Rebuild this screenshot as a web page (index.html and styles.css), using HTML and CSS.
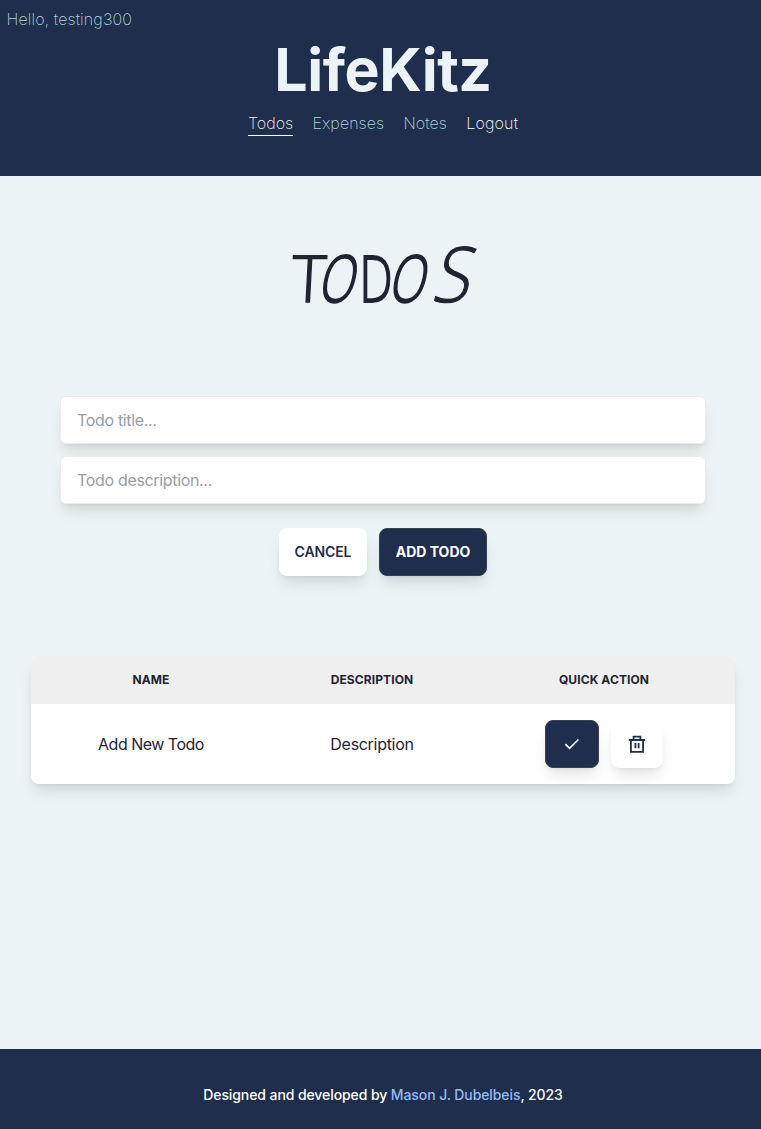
FILE: index.html
```html
<!DOCTYPE html>
<html lang="en">
<head>
<meta charset="utf-8">
<title>LifeKitz</title>
<link rel="stylesheet" href="styles.css">
</head>
<body>
<div class="page">
  <header class="header">
    <p class="greeting">Hello, testing300</p>
    <h1 class="brand">LifeKitz</h1>
    <nav class="nav">
      <a class="nav-link active">Todos</a>
      <a class="nav-link expenses">Expenses</a>
      <a class="nav-link notes">Notes</a>
      <a class="nav-link logout">Logout</a>
    </nav>
  </header>
  <main class="main">
    <h2 class="title"><span class="t">T</span><span class="o">O</span><span class="d">D</span><span class="o">O</span><span class="s">S</span></h2>
    <form class="form">
      <input class="field" type="text" placeholder="Todo title...">
      <input class="field" type="text" placeholder="Todo description...">
      <div class="buttons">
        <button class="btn light cancel" type="button">CANCEL</button>
        <button class="btn dark add" type="button">ADD TODO</button>
      </div>
    </form>
    <section class="table">
      <div class="row head"><span>NAME</span><span>DESCRIPTION</span><span>QUICK ACTION</span></div>
      <div class="row body-row">
        <span class="name">Add New Todo</span><span class="desc">Description</span>
        <div class="actions">
          <button class="btn dark check" type="button" aria-label="Complete">
            <svg width="16" height="16" viewBox="0 0 16 16" fill="none" stroke="currentColor" stroke-width="1.6"><path d="M1.4 8.1 5.6 12.3 14.4 3.5"/></svg>
          </button>
          <button class="btn light trash" type="button" aria-label="Delete">
            <svg width="18" height="18" viewBox="0 0 18 18" fill="none" stroke="currentColor" stroke-width="1.8"><path d="M.8 5h16.4M2.9 5v11.9h12.2V5M5.6 5V1.6h6.8V5M7.4 8.1v5.2M10.6 8.1v5.2"/></svg>
          </button>
        </div>
      </div>
    </section>
  </main>
  <footer class="footer"><p>Designed and developed by <a>Mason J. Dubelbeis</a>, 2023</p></footer>
</div>
</body>
</html>
```
FILE: styles.css
```css
* { box-sizing: border-box; }
body { margin: 0; background: #ebf3f7; color: #1f2430; font-family: Inter, "Liberation Sans", sans-serif; font-size: 16px; }
p, h1, h2 { margin: 0; }
.page { display: flex; flex-direction: column; height: 1129px; overflow: hidden; }
.header { height: 176px; flex: none; background: #1f2e4c; padding-left: 5px; }
.greeting { padding: 9px 0 0 1.5px; line-height: 20px; font-weight: 200; letter-spacing: .12px; color: #a8dada; }
.brand { height: 72px; margin-top: 5px; line-height: 72px; font-size: 59px; font-weight: 700; letter-spacing: -.45px; text-align: center; color: #ebf3f7; }
.nav { display: flex; justify-content: center; gap: 19.4px; margin-top: 6px; }
.nav-link { height: 24px; line-height: 23px; font-weight: 200; letter-spacing: .05px; color: #a8dada; border-bottom: 1px solid transparent; }
.nav-link.active { color: #ebf3f7; border-color: #fff; }
.nav-link.logout { color: #fff; letter-spacing: .15px; }
.main { flex: 1; padding-left: 5px; }
.title { display: grid; grid-template-columns: 36px 27px 44px 26px 52px; justify-content: center; height: 220px; padding: 61px 0 0; line-height: 80px; font-family: "Open Sans", sans-serif; font-size: 65px; font-weight: 300; -webkit-text-stroke: 1.4px #1f2430; }
.title span { display: flex; justify-content: center; height: 80px; }
.title .t { transform: skewX(-3deg); }
.title .o { transform: skewX(-13deg) scaleX(.72); -webkit-text-stroke-width: 2px; }
.title .d { transform: scaleX(.72); -webkit-text-stroke-width: 2px; }
.title .s { transform: skewX(-14deg) scale(1.05, 1.18); transform-origin: 50% 78%; -webkit-text-stroke-width: 1px; }
.form { width: 646px; margin: 0 auto; display: flex; flex-direction: column; gap: 12px; }
.field { height: 48px; border: 1px solid #e9edf0; border-radius: 6px; padding: 0 16px; background: #fff; font: 16px Inter, sans-serif; letter-spacing: -.33px; box-shadow: 0 10px 15px -3px rgba(0,0,0,.1), 0 4px 6px -4px rgba(0,0,0,.1); }
.field::placeholder { color: #979eac; opacity: 1; }
.buttons { display: flex; justify-content: center; gap: 12px; margin-top: 12px; }
.btn { display: flex; align-items: center; justify-content: center; height: 48px; padding: 0; border: 1px solid transparent; border-radius: 8px; font: 600 14px Inter, sans-serif; box-shadow: 0 10px 15px -3px rgba(0,0,0,.1), 0 4px 6px -4px rgba(0,0,0,.1); }
.light { background: #fff; color: #1f2e4c; border-color: #fff; }
.dark { background: #1f2e4c; color: #fff; border-color: #374151; }
.cancel { width: 88px; padding-bottom: 2px; letter-spacing: -.1px; }
.add { width: 108px; padding-bottom: 2px; font-weight: 700; }
.table { width: 704px; margin: 80px auto 0; border-radius: 8px; background: #fff; box-shadow: 0 10px 15px -3px rgba(0,0,0,.1), 0 4px 6px -4px rgba(0,0,0,.1); }
.row { display: grid; grid-template-columns: 240px 202px 262px; align-items: center; text-align: center; }
.head { height: 48px; padding-bottom: 2px; background: #efefef; border-radius: 8px 8px 0 0; font-size: 12px; font-weight: 700; letter-spacing: .1px; }
.body-row { height: 80px; }
.name { letter-spacing: -.5px; }
.desc { letter-spacing: -.3px; }
.actions { display: flex; justify-content: center; gap: 12px; }
.check { width: 54px; }
.trash { width: 52px; }
.footer { height: 80px; flex: none; padding: 36px 0 0 5px; background: #1f2e4c; color: #fff; text-align: center; font-size: 14px; line-height: 20px; font-weight: 500; letter-spacing: -.09px; }
.footer a { color: #93bcf8; }
```
